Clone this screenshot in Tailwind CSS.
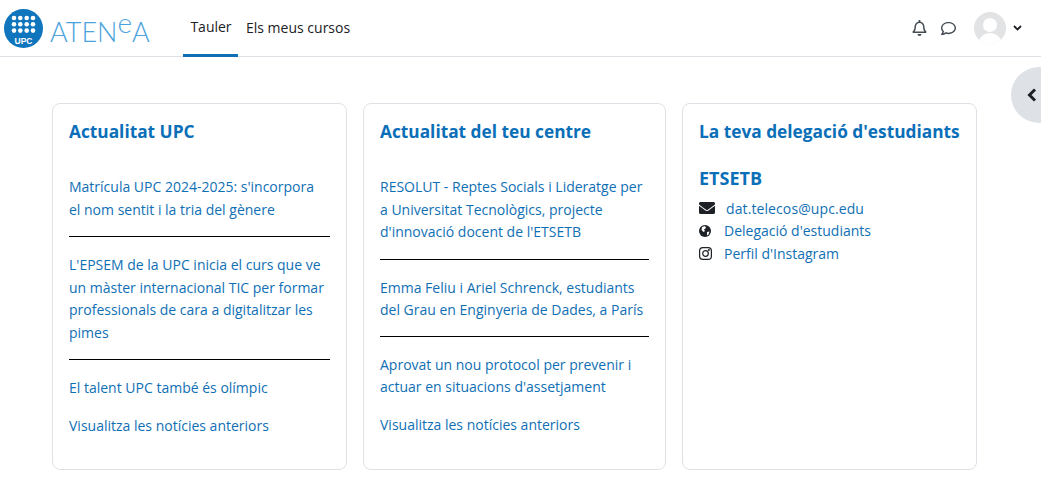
<!DOCTYPE html>
<html lang="ca">
  <head>
    <meta charset="UTF-8" />
    <title>Tauler</title>
    <script src="https://cdn.jsdelivr.net/npm/@tailwindcss/browser@4"></script>
  </head>
  <body class="bg-white font-['Open_Sans',sans-serif] text-[14px] text-[#0f6fb5] overflow-hidden">
    <header class="h-[57px] border-b border-[#dee2e6] flex items-center">
      <a href="#" class="flex items-center ml-[4px] w-[179px] shrink-0">
        <svg width="39" height="39" viewBox="0 0 39 39" class="shrink-0">
          <circle cx="19.5" cy="19.5" r="19.5" fill="#0f75bc" />
          <g fill="#fff">
            <circle cx="10" cy="9" r="2.3" /><circle cx="16.300" cy="9" r="2.3" /><circle cx="22.700" cy="9" r="2.3" /><circle cx="29" cy="9" r="2.3" />
            <circle cx="10" cy="15.3" r="2.3" /><circle cx="16.300" cy="15.3" r="2.3" /><circle cx="22.700" cy="15.3" r="2.3" /><circle cx="29" cy="15.3" r="2.3" />
            <circle cx="10" cy="21.6" r="2.3" /><circle cx="16.300" cy="21.6" r="2.3" /><circle cx="22.700" cy="21.6" r="2.3" /><circle cx="29" cy="21.6" r="2.3" />
          </g>
          <text x="19.5" y="35" text-anchor="middle" fill="#fff" font-size="8.500" font-weight="700" font-family="Liberation Sans">UPC</text>
        </svg>
        <span class="ml-[7px] flex items-baseline font-['Lato',sans-serif] font-light text-[#4aa3dc] text-[27px] leading-none mt-[5px]">ATEN<span class="text-[28px] -translate-y-[9px]">e</span>A</span>
      </a>
      <nav class="flex h-full text-[#1d2125]">
        <a href="#" class="h-[57px] w-[55px] border-b-[3px] border-[#0f6fb5] flex items-center justify-center pl-[1px] pb-[1px]">Tauler</a>
        <a href="#" class="h-[57px] pl-[8px] flex items-center pb-[2px]">Els meus cursos</a>
      </nav>
      <div class="ml-auto flex items-center mr-[19px]">
        <svg width="15" height="16" viewBox="0 0 448 512" fill="#444b52" class="mr-[14px]"><path d="M439.39 362.29c-19.32-20.76-55.47-51.99-55.47-154.29 0-77.7-54.48-139.9-127.94-155.16V32c0-17.67-14.32-32-31.98-32s-31.98 14.33-31.98 32v20.84C118.56 68.1 64.08 130.3 64.08 208c0 102.3-36.15 133.53-55.47 154.29-6 6.45-8.66 14.16-8.61 21.71.11 16.4 12.98 32 32.1 32h383.8c19.12 0 32-15.6 32.1-32 .05-7.55-2.61-15.27-8.61-21.71zM67.53 368c21.22-27.97 44.42-74.33 44.53-159.42 0-.2-.06-.38-.06-.58 0-61.86 50.14-112 112-112s112 50.14 112 112c0 .2-.06.38-.06.58.11 85.1 23.31 131.46 44.53 159.42H67.53zM224 512c35.32 0 63.97-28.65 63.97-64H160.03c0 35.35 28.65 64 63.97 64z" /></svg>
        <svg width="15" height="15" viewBox="0 0 512 512" fill="#444b52" class="mr-[18px] mt-[1px]"><path d="M256 32C114.6 32 0 125.1 0 240c0 47.6 19.9 91.2 52.9 126.3C38 405.7 7 439.1 6.5 439.5c-6.6 7-8.4 17.2-4.6 26S14.4 480 24 480c61.5 0 110-25.7 139.1-46.3C192 442.8 223.2 448 256 448c141.4 0 256-93.1 256-208S397.4 32 256 32zm0 368c-26.7 0-53.1-4.1-78.4-12.1l-22.7-7.2-19.5 13.8c-14.3 10.1-33.9 21.4-57.5 29 7.3-12.1 14.4-25.7 19.9-40.2l10.6-28.1-20.6-21.8C69.7 314.1 48 282.2 48 240c0-88.2 93.3-160 208-160s208 71.8 208 160-93.3 160-208 160z" /></svg>
        <svg width="32" height="32" viewBox="0 0 32 32" class="mr-[7px]">
          <defs><clipPath id="av"><circle cx="16" cy="16" r="16" /></clipPath></defs>
          <circle cx="16" cy="16" r="16" fill="#e2e3e4" />
          <g clip-path="url(#av)" fill="#fff"><circle cx="16" cy="13" r="7" /><ellipse cx="16" cy="30" rx="11" ry="9" /></g>
        </svg>
        <svg width="9" height="6" viewBox="0 0 9 6" fill="none" stroke="#1d2125" stroke-width="1.8"><path d="M1 1l3.5 3.5L8 1" /></svg>
      </div>
    </header>

    <button class="absolute left-[1011px] top-[67px] w-[56px] h-[56px] rounded-full bg-[#dee2e6] flex items-center pl-[16px]">
      <svg width="10" height="14" viewBox="0 0 10 14" fill="none" stroke="#1d2125" stroke-width="3"><path d="M8 1.5L2.5 7 8 12.500" /></svg>
    </button>

    <main class="flex gap-[16px] pl-[52px] pt-[46px]">
      <section class="w-[295px] h-[367px] border border-[#dee2e6] rounded-lg px-[16px] pt-[16px]">
        <h2 class="text-[17.3px] font-bold leading-[24px] text-[#0a6fb8]">Actualitat UPC</h2>
        <a href="#" class="block mt-[32px] leading-[22.5px]">Matrícula UPC 2024-2025: s'incorpora<br />el nom sentit i la tria del gènere</a>
        <hr class="border-black mt-[15px]" />
        <a href="#" class="block mt-[17px] leading-[22.5px]">L'EPSEM de la UPC inicia el curs que ve un màster internacional TIC per formar professionals de cara a digitalitzar les pimes</a>
        <hr class="border-black mt-[15px]" />
        <a href="#" class="block mt-[17px] leading-[22.5px]">El talent UPC també és olímpic</a>
        <a href="#" class="block mt-[15px] leading-[22.5px]">Visualitza les notícies anteriors</a>
      </section>

      <section class="w-[303px] h-[367px] border border-[#dee2e6] rounded-lg px-[16px] pt-[16px]">
        <h2 class="text-[17.3px] font-bold leading-[24px] text-[#0a6fb8]">Actualitat del teu centre</h2>
        <a href="#" class="block mt-[32px] leading-[22.5px]">RESOLUT - Reptes Socials i Lideratge per a Universitat Tecnològics, projecte d'innovació docent de l'ETSETB</a>
        <hr class="border-black mt-[15px]" />
        <a href="#" class="block mt-[17px] leading-[22.5px]">Emma Feliu i Ariel Schrenck, estudiants del Grau en Enginyeria de Dades, a París</a>
        <hr class="border-black mt-[14px]" />
        <a href="#" class="block mt-[17px] leading-[22.5px]">Aprovat un nou protocol per prevenir i actuar en situacions d'assetjament</a>
        <a href="#" class="block mt-[15px] leading-[22.5px]">Visualitza les notícies anteriors</a>
      </section>

      <section class="w-[295px] h-[367px] border border-[#dee2e6] rounded-lg pl-[16px] pr-[8px] pt-[16px]">
        <h2 class="text-[17.3px] font-bold leading-[24px] whitespace-nowrap text-[#0a6fb8]">La teva delegació d'estudiants</h2>
        <h3 class="text-[18px] font-bold leading-[24px] mt-[22px] text-[#0a6fb8]">ETSETB</h3>
        <ul class="mt-[7px]">
          <li class="flex items-center h-[22.5px]">
            <svg width="16" height="16" viewBox="0 0 512 512" fill="#1d2125" class="mr-[11px]"><path d="M502.3 190.8c3.9-3.1 9.7-.2 9.7 4.7V400c0 26.5-21.5 48-48 48H48c-26.5 0-48-21.5-48-48V195.6c0-5 5.7-7.8 9.7-4.7 22.4 17.4 52.1 39.5 154.1 113.6 21.1 15.4 56.7 47.8 92.2 47.6 35.7.3 72-32.8 92.3-47.6 102-74.1 131.6-96.3 154-113.7zM256 320c23.2.4 56.6-29.2 73.4-41.4 132.7-96.3 142.8-104.7 173.4-128.7 5.8-4.5 9.2-11.5 9.2-18.9v-19c0-26.5-21.5-48-48-48H48C21.5 64 0 85.5 0 112v19c0 7.4 3.4 14.3 9.2 18.9 30.6 23.9 40.7 32.4 173.4 128.7 16.8 12.2 50.2 41.8 73.4 41.4z" /></svg>
            <a href="#" class="tracking-[0.1px]">dat.telecos@upc.edu</a>
          </li>
          <li class="flex items-center h-[22.5px]">
            <svg width="12" height="12" viewBox="0 0 12 12" class="mr-[13px]"><circle cx="6" cy="6" r="6" fill="#1d2125" /><path d="M3 2l3-1 1 2-2 1.500L6 6 4.500 7 2.500 5zM8 7l2.500-.5L9.500 9.500 8 10.500z" fill="#fff" /></svg>
            <a href="#">Delegació d'estudiants</a>
          </li>
          <li class="flex items-center h-[22.5px]">
            <svg width="13" height="13" viewBox="0 0 13 13" fill="none" stroke="#1d2125" stroke-width="1.200" class="mr-[12px]"><rect x=".6" y=".6" width="11.800" height="11.800" rx="3.200" /><circle cx="6.500" cy="6.500" r="2.800" /><circle cx="9.900" cy="3.100" r=".4" /></svg>
            <a href="#">Perfil d'Instagram</a>
          </li>
        </ul>
      </section>
    </main>
  </body>
</html>
